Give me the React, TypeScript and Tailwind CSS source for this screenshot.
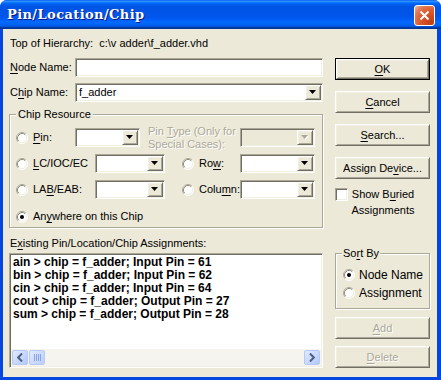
import React from "react";

const sunken =
  "border border-t-[#aca899] border-l-[#aca899] border-r-white border-b-white shadow-[inset_1px_1px_0_#716f64,inset_-1px_-1px_0_#f1efe2]";
const raised =
  "border border-t-white border-l-white border-r-[#716f64] border-b-[#716f64] shadow-[inset_1px_1px_0_#f1efe2,inset_-1px_-1px_0_#aca899] bg-[#ece9d8]";
const etched = "border border-[#aca899] shadow-[1px_1px_0_#fff,inset_1px_1px_0_#fff]";
const grayText = "text-[#aca899] [text-shadow:1px_1px_0_#fff]";

function U({ children }: { children: React.ReactNode }) {
  return <span className="underline underline-offset-[2px]">{children}</span>;
}

function Radio({ on }: { on?: boolean }) {
  return (
    <svg width="12" height="12" viewBox="0 0 12 12" className="shrink-0">
      <circle cx="6" cy="6" r="5" fill="#fff" />
      <path d="M2.11 9.89A5.5 5.5 0 0 1 9.89 2.11" stroke="#aca899" fill="none" />
      <path d="M2.82 9.18A4.5 4.5 0 0 1 9.18 2.82" stroke="#8d8b80" fill="none" />
      <path d="M9.89 2.11A5.5 5.5 0 0 1 2.11 9.89" stroke="#fff" fill="none" />
      <path d="M9.18 2.82A4.5 4.5 0 0 1 2.82 9.18" stroke="#f1efe2" fill="none" />
      {on && <circle cx="6" cy="6" r="2" fill="#000" />}
    </svg>
  );
}

function Arrow({ disabled }: { disabled?: boolean }) {
  return (
    <svg width="8" height="5" viewBox="0 0 8 5">
      {disabled && <polygon points="1,1 8,1 4.5,5" fill="#fff" />}
      <polygon points="0,0 7,0 3.5,4" fill={disabled ? "#aca899" : "#000"} />
    </svg>
  );
}

function Combo({ className, value, disabled }: { className: string; value?: string; disabled?: boolean }) {
  return (
    <div className={`${sunken} ${className} h-[19px] p-[1px] flex shrink-0 ${disabled ? "bg-[#ece9d8]" : "bg-white"}`}>
      <div className="flex-1 pl-[2px] leading-[15px] truncate">{value}</div>
      <div className={`${raised} w-[16px] h-full flex items-center justify-center`}>
        <Arrow disabled={disabled} />
      </div>
    </div>
  );
}

function Button({ children, isDefault, disabled, className = "" }: { children: React.ReactNode; isDefault?: boolean; disabled?: boolean; className?: string }) {
  return (
    <div className={`h-[22px] w-[95px] shrink-0 ${isDefault ? "border border-black" : ""} ${className}`}>
      <div className={`${raised} h-full w-full flex items-center justify-center ${disabled ? grayText : ""}`}>{children}</div>
    </div>
  );
}

function ScrollBtn({ dir }: { dir: "l" | "r" }) {
  return (
    <div className="w-[16px] h-[15px] rounded-[2px] border border-[#b6c9f5] bg-[linear-gradient(135deg,#e1eafe,#c5d6fc_60%,#b3c8f8)] flex items-center justify-center">
      <svg width="6" height="9" viewBox="0 0 6 9">
        <path d={dir === "l" ? "M5 0.5L1.2 4.5L5 8.5" : "M1 0.5L4.8 4.5L1 8.5"} stroke="#4d6185" strokeWidth="2" fill="none" />
      </svg>
    </div>
  );
}

export default function App() {
  const rows = [
    "ain > chip = f_adder; Input Pin = 61",
    "bin > chip = f_adder; Input Pin = 62",
    "cin > chip = f_adder; Input Pin = 64",
    "cout > chip = f_adder; Output Pin = 27",
    "sum > chip = f_adder; Output Pin = 28",
  ];
  return (
    <div className="w-[441px] h-[380px] flex flex-col rounded-t-[7px] overflow-hidden bg-[#0346e0] [font-family:'Liberation_Sans',Arial,sans-serif] text-[11px] text-black">
      <div className="h-[29px] shrink-0 flex items-center pl-[7px] pr-[6px] bg-[linear-gradient(180deg,#0058ee_0%,#3593ff_4%,#288eff_6%,#127dff_8%,#036ffc_10%,#0262ee_14%,#0057e5_20%,#0054e3_24%,#0055eb_56%,#005bf5_66%,#026afe_76%,#0062ef_86%,#0052d6_92%,#0040ab_94%,#003092_100%)]">
        <span className="text-white font-bold text-[13px] tracking-[0.4px] [font-family:'DejaVu_Serif',serif] [text-shadow:1px_1px_0_#0a1883] mt-[1px]">
          Pin/Location/Chip
        </span>
        <div className="ml-auto mt-[1px] w-[21px] h-[21px] rounded-[3px] border border-white bg-[radial-gradient(circle_at_85%_85%,#c13d14_0%,#dc5a2e_50%,#e07a55_75%,#f3b8a2_100%)] flex items-center justify-center">
          <svg width="11" height="11" viewBox="0 0 11 11">
            <path d="M1.5 1.5L9.5 9.5M9.5 1.5L1.5 9.5" stroke="#fff" strokeWidth="2" />
          </svg>
        </div>
      </div>

      <div className="flex-1 ml-[3px] mr-[4px] mb-[3px] bg-[#ece9d8] flex pl-[6px] gap-[12px]">
        {/* left column */}
        <div className="w-[314px] flex flex-col">
          <div className="mt-[7px] h-[14px] leading-[14px] pl-[1px] whitespace-pre">Top of Hierarchy:  c:\v adder\f_adder.vhd</div>
          <div className="mt-[8px] flex items-center h-[19px]">
            <div className="w-[66px] pl-[1px]"><U>N</U>ode Name:</div>
            <div className={`${sunken} w-[248px] h-[19px] bg-white`} />
          </div>
          <div className="mt-[6px] flex items-center h-[19px]">
            <div className="w-[66px] pl-[1px]">C<U>h</U>ip Name:</div>
            <Combo className="w-[248px]" value="f_adder" />
          </div>

          <fieldset className={`mt-[6px] ${etched} h-[120px] pl-[6px]`}>
            <legend className="px-[2px] leading-[13px] bg-[#ece9d8]">Chip Resource</legend>
            <div className="mt-[7px] flex items-center h-[19px]">
              <div className="w-[59px] flex items-center gap-[5px]"><Radio /><span><U>P</U>in:</span></div>
              <Combo className="w-[65px]" />
              <div className={`ml-[8px] w-[92px] leading-[13px] ${grayText}`}>Pin <U>T</U>ype (Only for<br />Special Cases):</div>
              <Combo className="w-[75px]" disabled />
            </div>
            <div className="mt-[7px] flex items-center h-[19px]">
              <div className="w-[79px] flex items-center gap-[5px]"><Radio /><span><U>L</U>C/IOC/EC</span></div>
              <Combo className="w-[70px]" />
              <div className="ml-[17px] w-[58px] flex items-center gap-[5px]"><Radio /><span>Ro<U>w</U>:</span></div>
              <Combo className="w-[75px]" />
            </div>
            <div className="mt-[7px] flex items-center h-[19px]">
              <div className="w-[79px] flex items-center gap-[5px]"><Radio /><span>LA<U>B</U>/EAB:</span></div>
              <Combo className="w-[70px]" />
              <div className="ml-[17px] w-[58px] flex items-center gap-[5px]"><Radio /><span>Colu<U>m</U>n:</span></div>
              <Combo className="w-[75px]" />
            </div>
            <div className="mt-[11px] flex items-center h-[13px] gap-[5px]">
              <Radio on /><span>An<U>y</U>where on this Chip</span>
            </div>
          </fieldset>

          <div className="mt-[8px] h-[14px] leading-[14px] pl-[1px]">E<U>x</U>isting Pin/Location/Chip Assignments:</div>
          <div className={`${sunken} mt-[3px] h-[115px] bg-white p-[1px] flex flex-col`}>
            <div className="flex-1 pl-[2px] pt-[1px] font-bold text-[12px] leading-[13px]">
              {rows.map((r) => (
                <div key={r} className="whitespace-pre">{r}</div>
              ))}
            </div>
            <div className="h-[17px] bg-[#f5f4ee] flex items-center px-[1px] gap-[1px]">
              <ScrollBtn dir="l" />
              <div className="w-[16px] h-[15px] rounded-[2px] border border-[#b6c9f5] bg-[linear-gradient(135deg,#e1eafe,#c9d8fc_60%,#bccff9)] flex items-center justify-center gap-[1px]">
                {[0, 1, 2, 3].map((i) => (
                  <div key={i} className="w-[1px] h-[7px] bg-[#8aa4e6]" />
                ))}
              </div>
              <div className="flex-1" />
              <ScrollBtn dir="r" />
            </div>
          </div>
        </div>

        {/* right column */}
        <div className="w-[95px] flex flex-col">
          <Button isDefault className="mt-[29px]"><U>O</U>K</Button>
          <Button className="mt-[11px]"><U>C</U>ancel</Button>
          <Button className="mt-[11px]"><U>S</U>earch...</Button>
          <Button className="mt-[11px]">Assign De<U>v</U>ice...</Button>
          <div className="mt-[7px] flex items-start">
            <div className={`${sunken} mt-[2px] w-[13px] h-[13px] bg-white shrink-0`} />
            <div className="w-[70px] text-center leading-[16px]">Show B<U>u</U>ried<br />Assignments</div>
          </div>
          <fieldset className={`mt-[29px] ${etched} h-[62px] pl-[7px]`}>
            <legend className="-ml-[1px] px-[1px] leading-[13px] bg-[#ece9d8]">So<U>r</U>t By</legend>
            <div className="mt-[8px] flex items-center h-[13px] gap-[4px]"><Radio on /><span className="text-[12px]">Node Name</span></div>
            <div className="mt-[5px] flex items-center h-[13px] gap-[4px]"><Radio /><span className="text-[12px]">Assignment</span></div>
          </fieldset>
          <Button disabled className="mt-[8px]"><U>A</U>dd</Button>
          <Button disabled className="mt-[7px]"><U>D</U>elete</Button>
        </div>
      </div>
    </div>
  );
}
